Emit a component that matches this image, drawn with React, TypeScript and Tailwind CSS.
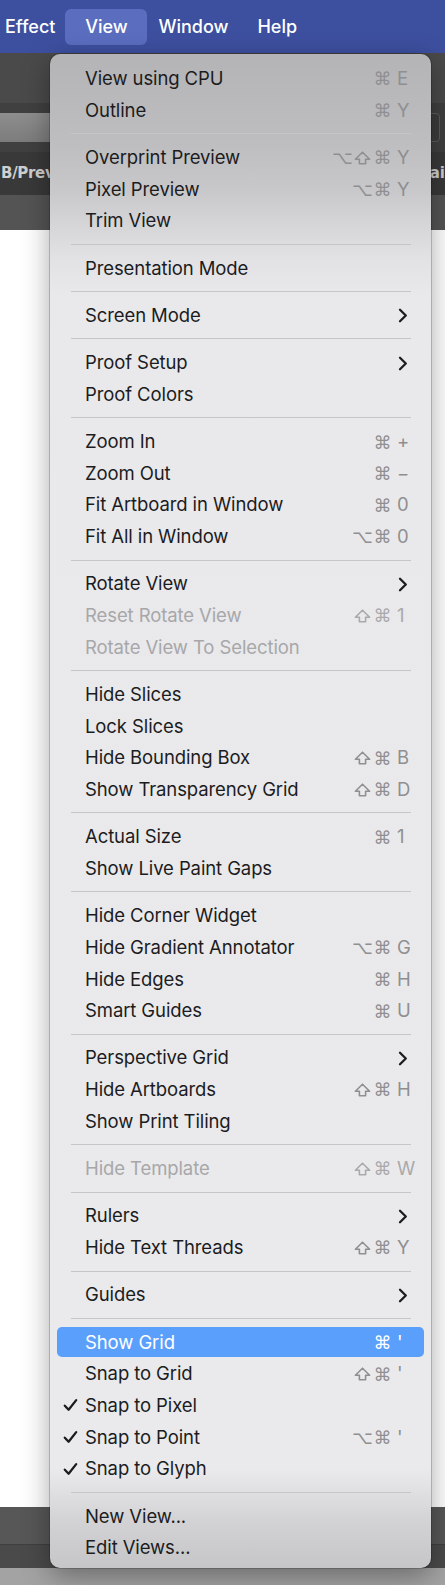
import React from 'react'
import clsx from 'clsx'

type Item = {
  label: string
  mods?: string[]
  shortcut?: string
  sub?: boolean
  disabled?: boolean
  checked?: boolean
  active?: boolean
}

const sections: Item[][] = [
  [
    { label: 'View using CPU', mods: ['⌘'], shortcut: 'E' },
    { label: 'Outline', mods: ['⌘'], shortcut: 'Y' },
  ],
  [
    { label: 'Overprint Preview', mods: ['⌥', '⇧', '⌘'], shortcut: 'Y' },
    { label: 'Pixel Preview', mods: ['⌥', '⌘'], shortcut: 'Y' },
    { label: 'Trim View' },
  ],
  [{ label: 'Presentation Mode' }],
  [{ label: 'Screen Mode', sub: true }],
  [{ label: 'Proof Setup', sub: true }, { label: 'Proof Colors' }],
  [
    { label: 'Zoom In', mods: ['⌘'], shortcut: '+' },
    { label: 'Zoom Out', mods: ['⌘'], shortcut: '−' },
    { label: 'Fit Artboard in Window', mods: ['⌘'], shortcut: '0' },
    { label: 'Fit All in Window', mods: ['⌥', '⌘'], shortcut: '0' },
  ],
  [
    { label: 'Rotate View', sub: true },
    { label: 'Reset Rotate View', mods: ['⇧', '⌘'], shortcut: '1', disabled: true },
    { label: 'Rotate View To Selection', disabled: true },
  ],
  [
    { label: 'Hide Slices' },
    { label: 'Lock Slices' },
    { label: 'Hide Bounding Box', mods: ['⇧', '⌘'], shortcut: 'B' },
    { label: 'Show Transparency Grid', mods: ['⇧', '⌘'], shortcut: 'D' },
  ],
  [{ label: 'Actual Size', mods: ['⌘'], shortcut: '1' }, { label: 'Show Live Paint Gaps' }],
  [
    { label: 'Hide Corner Widget' },
    { label: 'Hide Gradient Annotator', mods: ['⌥', '⌘'], shortcut: 'G' },
    { label: 'Hide Edges', mods: ['⌘'], shortcut: 'H' },
    { label: 'Smart Guides', mods: ['⌘'], shortcut: 'U' },
  ],
  [
    { label: 'Perspective Grid', sub: true },
    { label: 'Hide Artboards', mods: ['⇧', '⌘'], shortcut: 'H' },
    { label: 'Show Print Tiling' },
  ],
  [{ label: 'Hide Template', mods: ['⇧', '⌘'], shortcut: 'W', disabled: true }],
  [{ label: 'Rulers', sub: true }, { label: 'Hide Text Threads', mods: ['⇧', '⌘'], shortcut: 'Y' }],
  [{ label: 'Guides', sub: true }],
  [
    { label: 'Show Grid', mods: ['⌘'], shortcut: "'", active: true },
    { label: 'Snap to Grid', mods: ['⇧', '⌘'], shortcut: "'" },
    { label: 'Snap to Pixel', checked: true },
    { label: 'Snap to Point', mods: ['⌥', '⌘'], shortcut: "'", checked: true },
    { label: 'Snap to Glyph', checked: true },
  ],
  [{ label: 'New View...' }, { label: 'Edit Views...' }],
]

function Check() {
  return (
    <svg width="15" height="13" viewBox="0 0 15 13" fill="none">
      <path d="M1.8 7.2 L5.6 11.2 L13.2 1.6" stroke="#1c1c1e" strokeWidth="2.3" strokeLinecap="round" strokeLinejoin="round" />
    </svg>
  )
}

function Chevron() {
  return (
    <svg width="10" height="15" viewBox="0 0 10 15" fill="none">
      <path d="M2 1.8 L7.8 7.5 L2 13.2" stroke="#1c1c1e" strokeWidth="2.3" strokeLinecap="round" strokeLinejoin="round" />
    </svg>
  )
}

// shift key symbol, drawn so the hollow arrow matches the macOS one
function ShiftKey() {
  return (
    <svg width="17" height="14" viewBox="0 0 17 14" fill="none">
      <path d="M8.5 1.2 L15.6 8.2 H11.6 V12.8 H5.4 V8.2 H1.4 Z" stroke="currentColor" strokeWidth="1.6" strokeLinejoin="round" />
    </svg>
  )
}

function MenuRow({ item }: { item: Item }) {
  const { label, mods, shortcut, sub, disabled, checked, active } = item
  const keyColor = active ? 'text-white' : disabled ? 'text-[#a9a9ab]' : 'text-[#8f8f91]'
  return (
    <div className="h-[31.65px] px-[7px] py-[0.5px]">
      <div
        className={clsx(
          'relative flex h-full items-center rounded-[5px] pl-[28px] pr-[12px] pt-[1px]',
          active && 'bg-[#5a9ffb]'
        )}
      >
        {checked && (
          <span className="absolute left-[6px] top-1/2 -translate-y-1/2">
            <Check />
          </span>
        )}
        <span
          className={clsx(
            'flex-1 text-[18.5px] tracking-[-0.1px]',
            active ? 'text-white' : disabled ? 'text-[#a7a7a9]' : 'text-[#1c1c1e]'
          )}
        >
          {label}
        </span>
        {mods && (
          <span className={clsx('flex items-center gap-[3px] font-["DejaVu_Sans",sans-serif] text-[18px]', keyColor)}>
            {mods.map((m, i) => (
              <span key={i} className="flex w-[17px] items-center justify-center">
                {m === '⇧' ? <ShiftKey /> : m}
              </span>
            ))}
          </span>
        )}
        <span className={clsx('ml-[6px] flex w-[15px] items-center text-[18.5px]', keyColor)}>
          {sub ? (
            <span className="ml-[1px]">
              <Chevron />
            </span>
          ) : (
            shortcut
          )}
        </span>
      </div>
    </div>
  )
}

export default function App() {
  return (
    <div className="relative h-[1585px] w-[445px] overflow-hidden bg-white font-[Inter,'Noto_Sans',sans-serif]">
      {/* menu bar */}
      <div className="flex h-[53px] items-center bg-[#3d4f9f] text-[18px] font-medium text-white">
        <span className="ml-[5px]">Effect</span>
        <span className="ml-[10px] flex h-[36px] w-[82px] items-center justify-center rounded-[6px] bg-[#5a6dbf]">View</span>
        <span className="ml-[11px]">Window</span>
        <span className="ml-[29px]">Help</span>
      </div>

      {/* app window behind the menu */}
      <div className="h-[50px] bg-[#4a4a4a]" />
      <div className="h-[10px] bg-[#404040]" />
      <div className="flex h-[29px] items-stretch bg-[#404040]">
        <div className="flex-1 rounded-r-[4px] bg-[linear-gradient(180deg,#8e8e8e,#7c7c7c)]" />
        <div className="ml-[6px] mr-[5px] w-[60px] rounded-[4px] border border-[#5c5c5c] bg-[#3c3c3c]" />
      </div>
      <div className="h-[10px] bg-[#404040]" />
      <div className="flex h-[43px] items-center justify-between bg-[#393939] pl-[1px] text-[15px] font-bold text-[#cfcfcf]">
        <span className="font-['DejaVu_Sans',sans-serif] tracking-[-0.3px]">B/Preview</span>
        <span className="font-['DejaVu_Sans',sans-serif]">.ai</span>
      </div>
      <div className="h-[35px] bg-[#545454]" />
      <div className="h-[1277px] bg-white" />
      <div className="h-[38px] border-b border-[#3f3f3f] bg-[#575757]" />
      <div className="h-[23px] bg-[#4a4a4a]" />
      <div className="h-[17px] bg-[#a3a3a3]" />

      {/* dropdown */}
      <div className="absolute left-[50px] top-[54px] w-[381px] rounded-[10px] bg-[linear-gradient(180deg,#b4b4b6_0%,#bebec0_6%,#c8c8ca_9%,#d4d4d6_11%,#e2e2e4_13.5%,#e9e9eb_16%,#eaeaec_93.5%,#d2d2d4_97%,#c6c6c8_100%)] pb-[5px] pt-[8.5px] shadow-[0_8px_28px_rgba(0,0,0,0.35),0_0_0_1px_rgba(0,0,0,0.18)]">
        {sections.map((section, si) => (
          <div key={si}>
            {si > 0 && (
              <div className="flex h-[15.7px] items-center px-[20.5px]">
                <div className="h-px w-full bg-[#c6c6c8]" />
              </div>
            )}
            {section.map((item) => (
              <MenuRow key={item.label} item={item} />
            ))}
          </div>
        ))}
      </div>
    </div>
  )
}
